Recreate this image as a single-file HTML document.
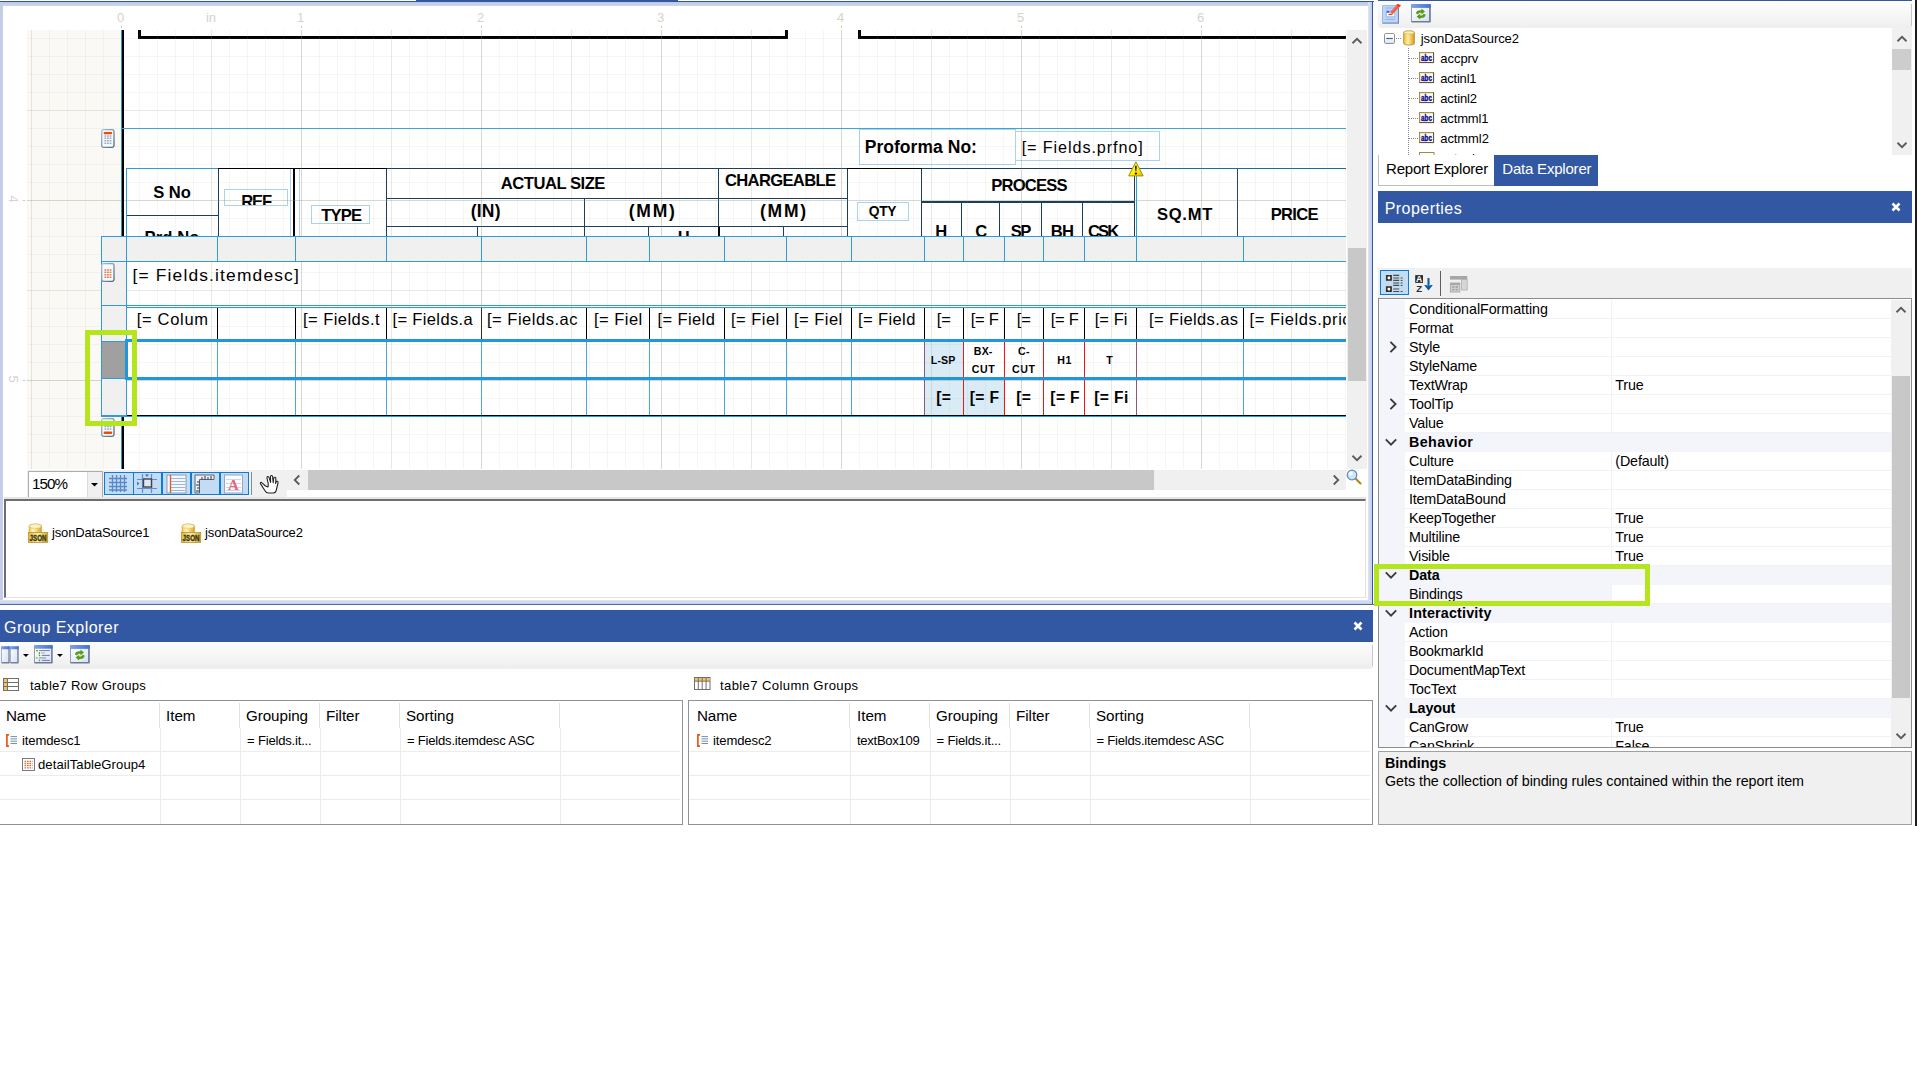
<!DOCTYPE html>
<html lang="en"><head><meta charset="utf-8"><title>Report Designer</title>
<style>
html,body{margin:0;padding:0;background:#fff;}
body{width:1924px;height:1084px;position:relative;overflow:hidden;font-family:"Liberation Sans",sans-serif;}
div{position:absolute;box-sizing:border-box;}
.t{white-space:nowrap;}
svg{position:absolute;overflow:visible;}

.ln{background:#3d9bd6;}

</style></head><body>
<div style="left:0px;top:1px;width:1374px;height:1px;background:#3358a3;"></div>
<div style="left:416px;top:0px;width:262px;height:2px;background:#3358a3;"></div>
<div style="left:0px;top:2px;width:1372px;height:4px;background:linear-gradient(#b9c5e3,#c4cee8 40%,#cfd7ec);"></div>
<div style="left:0px;top:2px;width:3px;height:603px;background:#c4cee8;"></div>
<div style="left:1368px;top:2px;width:4px;height:603px;background:linear-gradient(90deg,#dfe4f3,#c4cee8);"></div>
<div style="left:1372px;top:1px;width:1.4px;height:604px;background:#3358a3;"></div>
<div style="left:0px;top:600px;width:1372px;height:4px;background:linear-gradient(#dfe4f3,#c4cee8);"></div>
<div style="left:0px;top:604px;width:1374px;height:1px;background:#4a68b0;"></div>
<div class="t" style="left:116.88px;top:9.00px;font-size:13px;line-height:17px;color:#d9d2c6;">0</div>
<div style="left:121.0px;top:26px;width:1px;height:2px;background:#c9c4ba;"></div>
<div class="t" style="left:296.88px;top:9.00px;font-size:13px;line-height:17px;color:#d9d2c6;">1</div>
<div style="left:301.0px;top:26px;width:1px;height:2px;background:#c9c4ba;"></div>
<div class="t" style="left:476.88px;top:9.00px;font-size:13px;line-height:17px;color:#d9d2c6;">2</div>
<div style="left:481.0px;top:26px;width:1px;height:2px;background:#c9c4ba;"></div>
<div class="t" style="left:656.88px;top:9.00px;font-size:13px;line-height:17px;color:#d9d2c6;">3</div>
<div style="left:661.0px;top:26px;width:1px;height:2px;background:#c9c4ba;"></div>
<div class="t" style="left:836.88px;top:9.00px;font-size:13px;line-height:17px;color:#d9d2c6;">4</div>
<div style="left:841.0px;top:26px;width:1px;height:2px;background:#c9c4ba;"></div>
<div class="t" style="left:1016.88px;top:9.00px;font-size:13px;line-height:17px;color:#d9d2c6;">5</div>
<div style="left:1021.0px;top:26px;width:1px;height:2px;background:#c9c4ba;"></div>
<div class="t" style="left:1196.88px;top:9.00px;font-size:13px;line-height:17px;color:#d9d2c6;">6</div>
<div style="left:1201.0px;top:26px;width:1px;height:2px;background:#c9c4ba;"></div>
<div class="t" style="left:205.94px;top:9.00px;font-size:13px;line-height:17px;color:#d9d2c6;">in</div>
<div class="t" style="left:4.4px;top:190.4px;width:18px;height:18px;line-height:18px;font-size:13px;color:#d9d2c6;text-align:center;transform:rotate(90deg);">4</div>
<div style="left:23px;top:200px;width:2px;height:1px;background:#c9c4ba;"></div>
<div class="t" style="left:4.4px;top:370.4px;width:18px;height:18px;line-height:18px;font-size:13px;color:#d9d2c6;text-align:center;transform:rotate(90deg);">5</div>
<div style="left:23px;top:380px;width:2px;height:1px;background:#c9c4ba;"></div>
<div style="left:27px;top:30px;width:1319px;height:439px;overflow:hidden;background:#fff;">
<div style="left:-27px;top:-30px;width:1924px;height:1084px;">
<div style="left:27px;top:30px;width:94.5px;height:439px;background:#faf9f5;"></div>
<div style="left:138px;top:36px;width:650px;height:3px;background:#000;"></div>
<div style="left:138px;top:30px;width:3px;height:9px;background:#000;"></div>
<div style="left:785px;top:30px;width:3px;height:9px;background:#000;"></div>
<div style="left:858px;top:36px;width:500px;height:3px;background:#000;"></div>
<div style="left:858px;top:30px;width:3px;height:9px;background:#000;"></div>
<div style="left:858.6px;top:128.6px;width:157.6px;height:36.6px;border:1.2px solid #a9d3ee;"></div>
<div style="left:1015.4px;top:130.8px;width:144.8px;height:30.2px;border:1.2px solid #a9d3ee;"></div>
<div class="t" style="left:864.70px;top:136.34px;font-size:17.5px;line-height:23px;color:#000;font-weight:bold;letter-spacing:0.041px;">Proforma No:</div>
<div class="t" style="left:1021.70px;top:136.69px;font-size:16.2px;line-height:21px;color:#000;letter-spacing:0.900px;">[= Fields.prfno]</div>
<div style="left:0;top:160px;width:1924px;height:76.5px;overflow:hidden;">
<div style="left:0;top:-160px;width:1924px;height:400px;">
<div style="left:126px;top:168.1px;width:92px;height:1.2px;background:#2f9cd8;"></div>
<div style="left:218px;top:168.0px;width:169px;height:1.4px;background:#000;"></div>
<div style="left:387px;top:168.0px;width:461px;height:1.4px;background:#1b3f58;"></div>
<div style="left:847px;top:168.0px;width:75px;height:1.4px;background:#000;"></div>
<div style="left:922px;top:168.0px;width:213px;height:1.4px;background:#1b3f58;"></div>
<div style="left:1135px;top:168.0px;width:225px;height:1.4px;background:#1f6a9c;"></div>
<div style="left:125.9px;top:168.7px;width:1.2px;height:71.3px;background:#2f9cd8;"></div>
<div style="left:126.5px;top:214.7px;width:91.8px;height:1.4px;background:#1b3f58;"></div>
<div style="left:217.6px;top:168.7px;width:1.4px;height:71.3px;background:#1b3f58;"></div>
<div style="left:290.2px;top:168.7px;width:1.2px;height:71.3px;background:#a9d3ee;"></div>
<div style="left:293.25px;top:168.7px;width:2.1px;height:71.3px;background:#000;"></div>
<div style="left:299.0px;top:168.7px;width:1.2px;height:71.3px;background:#a9d3ee;"></div>
<div style="left:224px;top:188.9px;width:64.4px;height:17.2px;border:1.2px solid #a9d3ee;"></div>
<div style="left:310.8px;top:205.1px;width:59px;height:19px;border:1.2px solid #a9d3ee;"></div>
<div style="left:385.9px;top:168.7px;width:1.4px;height:71.3px;background:#1b3f58;"></div>
<div style="left:386.6px;top:197.95px;width:460.9px;height:1.3px;background:#1b3f58;"></div>
<div style="left:386.6px;top:225.95px;width:460.9px;height:1.3px;background:#1b3f58;"></div>
<div style="left:584.0px;top:199px;width:1.4px;height:41px;background:#1b3f58;"></div>
<div style="left:718.0px;top:168.7px;width:1.4px;height:71.3px;background:#1b3f58;"></div>
<div style="left:846.7px;top:168.7px;width:1.4px;height:71.3px;background:#1b3f58;"></div>
<div style="left:476.7px;top:227px;width:1.4px;height:13px;background:#1b3f58;"></div>
<div style="left:648.1px;top:227px;width:1.4px;height:13px;background:#1b3f58;"></div>
<div style="left:782.8px;top:227px;width:1.4px;height:13px;background:#1b3f58;"></div>
<div style="left:718.1px;top:227px;width:2.2px;height:13px;background:#000;"></div>
<div style="left:920.9px;top:168.7px;width:1.4px;height:71.3px;background:#1b3f58;"></div>
<div style="left:856.5px;top:201.9px;width:52.8px;height:19.4px;border:1.2px solid #a9d3ee;"></div>
<div style="left:921.6px;top:201.45px;width:213.4px;height:1.3px;background:#1b3f58;"></div>
<div style="left:960.7px;top:202px;width:1.4px;height:38px;background:#1b3f58;"></div>
<div style="left:998.6px;top:202px;width:1.4px;height:38px;background:#1b3f58;"></div>
<div style="left:1040.5px;top:202px;width:1.4px;height:38px;background:#1b3f58;"></div>
<div style="left:1081.6px;top:202px;width:1.4px;height:38px;background:#1b3f58;"></div>
<div style="left:1133.6px;top:168.7px;width:1.4px;height:71.3px;background:#1b3f58;"></div>
<div style="left:1135.8px;top:168.7px;width:1.2px;height:71.3px;background:#2f9cd8;"></div>
<div style="left:1236.8px;top:168.7px;width:1.4px;height:71.3px;background:#1b3f58;"></div>
<div class="t" style="left:153.25px;top:181.55px;font-size:16.6px;line-height:22px;color:#000;font-weight:bold;letter-spacing:-0.078px;">S No</div>
<div class="t" style="left:144.50px;top:227.25px;font-size:16.6px;line-height:22px;color:#000;font-weight:bold;letter-spacing:0.098px;">Prd No</div>
<div style="left:225px;top:190px;width:62.5px;height:15.2px;overflow:hidden;">
<div class="t" style="left:16.20px;top:1.05px;font-size:16.6px;line-height:22px;color:#000;font-weight:bold;letter-spacing:-1.067px;">REF</div>
</div>
<div class="t" style="left:321.20px;top:204.55px;font-size:16.6px;line-height:22px;color:#000;font-weight:bold;letter-spacing:-0.840px;">TYPE</div>
<div class="t" style="left:500.80px;top:173.25px;font-size:16.6px;line-height:22px;color:#000;font-weight:bold;letter-spacing:-0.477px;">ACTUAL SIZE</div>
<div class="t" style="left:470.70px;top:200.44px;font-size:17.5px;line-height:23px;color:#000;font-weight:bold;letter-spacing:0.211px;">(IN)</div>
<div class="t" style="left:628.70px;top:200.44px;font-size:17.5px;line-height:23px;color:#000;font-weight:bold;letter-spacing:1.797px;">(MM)</div>
<div class="t" style="left:724.95px;top:170.25px;font-size:16.6px;line-height:22px;color:#000;font-weight:bold;letter-spacing:-0.663px;">CHARGEABLE</div>
<div class="t" style="left:760.00px;top:200.44px;font-size:17.5px;line-height:23px;color:#000;font-weight:bold;letter-spacing:1.797px;">(MM)</div>
<div class="t" style="left:677.81px;top:227.25px;font-size:16.6px;line-height:22px;color:#000;font-weight:bold;">H</div>
<div class="t" style="left:868.70px;top:202.92px;font-size:13.8px;line-height:18px;color:#000;font-weight:bold;letter-spacing:-0.256px;">QTY</div>
<div class="t" style="left:991.30px;top:174.95px;font-size:16.6px;line-height:22px;color:#000;font-weight:bold;letter-spacing:-0.826px;">PROCESS</div>
<div class="t" style="left:935.21px;top:220.85px;font-size:16.6px;line-height:22px;color:#000;font-weight:bold;">H</div>
<div class="t" style="left:975.21px;top:220.85px;font-size:16.6px;line-height:22px;color:#000;font-weight:bold;">C</div>
<div class="t" style="left:1010.75px;top:220.85px;font-size:16.6px;line-height:22px;color:#000;font-weight:bold;letter-spacing:-1.623px;">SP</div>
<div class="t" style="left:1050.80px;top:220.85px;font-size:16.6px;line-height:22px;color:#000;font-weight:bold;letter-spacing:-0.888px;">BH</div>
<div class="t" style="left:1087.95px;top:220.85px;font-size:16.6px;line-height:22px;color:#000;font-weight:bold;letter-spacing:-1.850px;">CSK</div>
<div class="t" style="left:1157.00px;top:203.75px;font-size:16.6px;line-height:22px;color:#000;font-weight:bold;letter-spacing:0.687px;">SQ.MT</div>
<div class="t" style="left:1270.80px;top:203.75px;font-size:16.6px;line-height:22px;color:#000;font-weight:bold;letter-spacing:-0.747px;">PRICE</div>
</div></div>
<div style="left:924.7px;top:342px;width:39px;height:74px;background:#d9ebf4;"></div>
<div style="left:963.7px;top:380px;width:41.1px;height:36px;background:#d9ebf4;"></div>
<div class="t" style="left:132.50px;top:263.77px;font-size:17.4px;line-height:23px;color:#000;letter-spacing:1.156px;">[= Fields.itemdesc]</div>
<div class="t" style="left:136.70px;top:308.58px;font-size:16.5px;line-height:21px;color:#000;letter-spacing:0.689px;">[= Colum</div>
<div class="t" style="left:303.00px;top:308.58px;font-size:16.5px;line-height:21px;color:#000;letter-spacing:0.456px;">[= Fields.t</div>
<div class="t" style="left:392.50px;top:308.58px;font-size:16.5px;line-height:21px;color:#000;letter-spacing:0.356px;">[= Fields.a</div>
<div class="t" style="left:487.00px;top:308.58px;font-size:16.5px;line-height:21px;color:#000;letter-spacing:0.514px;">[= Fields.ac</div>
<div class="t" style="left:594.00px;top:308.58px;font-size:16.5px;line-height:21px;color:#000;letter-spacing:0.473px;">[= Fiel</div>
<div class="t" style="left:657.50px;top:308.58px;font-size:16.5px;line-height:21px;color:#000;letter-spacing:0.391px;">[= Field</div>
<div class="t" style="left:731.00px;top:308.58px;font-size:16.5px;line-height:21px;color:#000;letter-spacing:0.473px;">[= Fiel</div>
<div class="t" style="left:794.00px;top:308.58px;font-size:16.5px;line-height:21px;color:#000;letter-spacing:0.473px;">[= Fiel</div>
<div class="t" style="left:858.00px;top:308.58px;font-size:16.5px;line-height:21px;color:#000;letter-spacing:0.391px;">[= Field</div>
<div class="t" style="left:936.70px;top:308.58px;font-size:16.5px;line-height:21px;color:#000;letter-spacing:0.040px;">[=</div>
<div class="t" style="left:970.80px;top:308.58px;font-size:16.5px;line-height:21px;color:#000;letter-spacing:-0.321px;">[= F</div>
<div class="t" style="left:1016.70px;top:308.58px;font-size:16.5px;line-height:21px;color:#000;letter-spacing:0.040px;">[=</div>
<div class="t" style="left:1050.80px;top:308.58px;font-size:16.5px;line-height:21px;color:#000;letter-spacing:-0.321px;">[= F</div>
<div class="t" style="left:1094.70px;top:308.58px;font-size:16.5px;line-height:21px;color:#000;letter-spacing:0.050px;">[= Fi</div>
<div class="t" style="left:1149.00px;top:308.58px;font-size:16.5px;line-height:21px;color:#000;letter-spacing:0.373px;">[= Fields.as</div>
<div class="t" style="left:1249.50px;top:308.58px;font-size:16.5px;line-height:21px;color:#000;letter-spacing:0.547px;">[= Fields.price]</div>
<div style="left:217.1px;top:308px;width:1.2px;height:31.3px;background:#000;"></div>
<div style="left:295.1px;top:308px;width:1.2px;height:31.3px;background:#000;"></div>
<div style="left:386.1px;top:308px;width:1.2px;height:31.3px;background:#000;"></div>
<div style="left:481.1px;top:308px;width:1.2px;height:31.3px;background:#000;"></div>
<div style="left:586.1px;top:308px;width:1.2px;height:31.3px;background:#000;"></div>
<div style="left:648.7px;top:308px;width:1.2px;height:31.3px;background:#000;"></div>
<div style="left:723.7px;top:308px;width:1.2px;height:31.3px;background:#000;"></div>
<div style="left:785.9px;top:308px;width:1.2px;height:31.3px;background:#000;"></div>
<div style="left:850.9px;top:308px;width:1.2px;height:31.3px;background:#000;"></div>
<div style="left:924.0px;top:308px;width:1.2px;height:31.3px;background:#000;"></div>
<div style="left:963.0px;top:308px;width:1.2px;height:31.3px;background:#000;"></div>
<div style="left:1004.1px;top:308px;width:1.2px;height:31.3px;background:#000;"></div>
<div style="left:1043.0px;top:308px;width:1.2px;height:31.3px;background:#000;"></div>
<div style="left:1084.1px;top:308px;width:1.2px;height:31.3px;background:#000;"></div>
<div style="left:1136.1px;top:308px;width:1.2px;height:31.3px;background:#000;"></div>
<div style="left:1243.1px;top:308px;width:1.2px;height:31.3px;background:#000;"></div>
<div class="t" style="left:930.85px;top:353.03px;font-size:10.6px;line-height:14px;color:#000;font-weight:bold;letter-spacing:0.088px;">L-SP</div>
<div class="t" style="left:973.85px;top:344.03px;font-size:10.6px;line-height:14px;color:#000;font-weight:bold;letter-spacing:0.148px;">BX-</div>
<div class="t" style="left:971.70px;top:361.83px;font-size:10.6px;line-height:14px;color:#000;font-weight:bold;letter-spacing:0.605px;">CUT</div>
<div class="t" style="left:1018.05px;top:344.03px;font-size:10.6px;line-height:14px;color:#000;font-weight:bold;letter-spacing:0.257px;">C-</div>
<div class="t" style="left:1011.90px;top:361.83px;font-size:10.6px;line-height:14px;color:#000;font-weight:bold;letter-spacing:0.605px;">CUT</div>
<div class="t" style="left:1057.25px;top:353.03px;font-size:10.6px;line-height:14px;color:#000;font-weight:bold;letter-spacing:0.475px;">H1</div>
<div class="t" style="left:1106.16px;top:353.03px;font-size:10.6px;line-height:14px;color:#000;font-weight:bold;">T</div>
<div class="t" style="left:936.35px;top:387.89px;font-size:15.6px;line-height:20px;color:#000;font-weight:bold;letter-spacing:0.097px;">[=</div>
<div class="t" style="left:969.75px;top:387.89px;font-size:15.6px;line-height:20px;color:#000;font-weight:bold;letter-spacing:0.333px;">[= F</div>
<div class="t" style="left:1016.30px;top:387.89px;font-size:15.6px;line-height:20px;color:#000;font-weight:bold;letter-spacing:0.347px;">[=</div>
<div class="t" style="left:1050.35px;top:387.89px;font-size:15.6px;line-height:20px;color:#000;font-weight:bold;letter-spacing:0.383px;">[= F</div>
<div class="t" style="left:1094.25px;top:387.89px;font-size:15.6px;line-height:20px;color:#000;font-weight:bold;letter-spacing:0.399px;">[= Fi</div>
<div style="left:126.4px;top:414.75px;width:1233.6px;height:1.5px;background:#000;"></div>
<div style="left:27px;top:30px;width:1319px;height:439px;background-image:linear-gradient(90deg,rgba(140,130,110,.17) 1px,transparent 1px),linear-gradient(rgba(140,130,110,.17) 1px,transparent 1px),linear-gradient(90deg,rgba(150,140,120,.13) 1px,transparent 1px),linear-gradient(rgba(150,140,120,.13) 1px,transparent 1px),linear-gradient(90deg,rgba(160,150,130,.085) 1px,transparent 1px),linear-gradient(rgba(160,150,130,.085) 1px,transparent 1px);background-size:180px 180px,180px 180px,90px 90px,90px 90px,18px 18px,18px 18px;background-position:94px 0,0 170px,4px 0,0 80px,4px 0,0 8px;"></div>
<div style="left:121px;top:30px;width:1.2px;height:439px;background:#3d8fc6;"></div>
<div style="left:122px;top:30px;width:2.2px;height:439px;background:#000;"></div>
<div style="left:122px;top:128.15px;width:1238px;height:1.1px;background:#3fa3dc;"></div>
<div style="left:101.2px;top:236px;width:1300px;height:26.1px;background:#f0f0f0;border:1.2px solid #2f9cd8;"></div>
<div style="left:125.75px;top:236px;width:1.3px;height:26px;background:#2f9cd8;"></div>
<div style="left:217.05px;top:236px;width:1.3px;height:26px;background:#2f9cd8;"></div>
<div style="left:295.05px;top:236px;width:1.3px;height:26px;background:#2f9cd8;"></div>
<div style="left:386.05px;top:236px;width:1.3px;height:26px;background:#2f9cd8;"></div>
<div style="left:481.05px;top:236px;width:1.3px;height:26px;background:#2f9cd8;"></div>
<div style="left:586.05px;top:236px;width:1.3px;height:26px;background:#2f9cd8;"></div>
<div style="left:648.65px;top:236px;width:1.3px;height:26px;background:#2f9cd8;"></div>
<div style="left:723.65px;top:236px;width:1.3px;height:26px;background:#2f9cd8;"></div>
<div style="left:785.85px;top:236px;width:1.3px;height:26px;background:#2f9cd8;"></div>
<div style="left:850.85px;top:236px;width:1.3px;height:26px;background:#2f9cd8;"></div>
<div style="left:923.95px;top:236px;width:1.3px;height:26px;background:#2f9cd8;"></div>
<div style="left:962.95px;top:236px;width:1.3px;height:26px;background:#2f9cd8;"></div>
<div style="left:1004.05px;top:236px;width:1.3px;height:26px;background:#2f9cd8;"></div>
<div style="left:1042.95px;top:236px;width:1.3px;height:26px;background:#2f9cd8;"></div>
<div style="left:1084.05px;top:236px;width:1.3px;height:26px;background:#2f9cd8;"></div>
<div style="left:1136.05px;top:236px;width:1.3px;height:26px;background:#2f9cd8;"></div>
<div style="left:1243.05px;top:236px;width:1.3px;height:26px;background:#2f9cd8;"></div>
<div style="left:101.2px;top:261px;width:25.8px;height:155.3px;background:#f0f0f0;border:1.2px solid #2f9cd8;"></div>
<div style="left:101.2px;top:304.8px;width:1258.8px;height:1.2px;background:#2f9cd8;"></div>
<div style="left:126.4px;top:307.0px;width:1233.6px;height:1.2px;background:#2f9cd8;"></div>
<div style="left:217.15px;top:342px;width:1.1px;height:73.2px;background:#4aa6de;"></div>
<div style="left:295.15px;top:342px;width:1.1px;height:73.2px;background:#4aa6de;"></div>
<div style="left:386.15px;top:342px;width:1.1px;height:73.2px;background:#4aa6de;"></div>
<div style="left:481.15px;top:342px;width:1.1px;height:73.2px;background:#4aa6de;"></div>
<div style="left:586.15px;top:342px;width:1.1px;height:73.2px;background:#4aa6de;"></div>
<div style="left:648.75px;top:342px;width:1.1px;height:73.2px;background:#4aa6de;"></div>
<div style="left:723.75px;top:342px;width:1.1px;height:73.2px;background:#4aa6de;"></div>
<div style="left:785.95px;top:342px;width:1.1px;height:73.2px;background:#4aa6de;"></div>
<div style="left:850.95px;top:342px;width:1.1px;height:73.2px;background:#4aa6de;"></div>
<div style="left:924.05px;top:342px;width:1.1px;height:73.2px;background:#8d5877;"></div>
<div style="left:963.05px;top:342px;width:1.1px;height:73.2px;background:#f21616;"></div>
<div style="left:1004.15px;top:342px;width:1.1px;height:73.2px;background:#f21616;"></div>
<div style="left:1043.05px;top:342px;width:1.1px;height:73.2px;background:#f21616;"></div>
<div style="left:1084.15px;top:342px;width:1.1px;height:73.2px;background:#f21616;"></div>
<div style="left:1136.15px;top:342px;width:1.1px;height:73.2px;background:#8d5877;"></div>
<div style="left:1243.15px;top:342px;width:1.1px;height:73.2px;background:#4aa6de;"></div>
<div style="left:101.2px;top:415.5px;width:1258.8px;height:1px;background:#2f9cd8;"></div>
<div style="left:102px;top:342px;width:24px;height:36px;background:#a0a0a0;"></div>
<div style="left:126px;top:339.05px;width:1234px;height:3.1px;background:#2196d8;"></div>
<div style="left:126px;top:377.35px;width:1234px;height:2.9px;background:#2196d8;"></div>
<div style="left:125.4px;top:339.1px;width:3px;height:41.1px;background:#2196d8;"></div>
<div style="left:101.2px;top:340.8px;width:25.8px;height:1.2px;background:#2f9cd8;"></div>
<div style="left:101.2px;top:377.8px;width:25.8px;height:1.2px;background:#2f9cd8;"></div>
<svg style="left:100.6px;top:129.2px" width="14" height="19" viewBox="0 0 14 19"><defs><linearGradient id="sgtop" x1="0" y1="0" x2="1" y2="1"><stop offset="0" stop-color="#a9c3d8"/><stop offset="1" stop-color="#4f6578"/></linearGradient></defs><rect x=".7" y=".7" width="12.3" height="17.6" rx="1.8" fill="#f4f9fd" stroke="url(#sgtop)" stroke-width="1.3"/><rect x="2.6" y="2.9" width="8.6" height="2.4" rx="1" fill="#ee4a06"/><rect x="3.3499999999999996" y="6.15" width="1.9" height="1.5" rx=".5" fill="#8fa5b8" opacity=".9"/><rect x="5.95" y="6.15" width="1.9" height="1.5" rx=".5" fill="#8fa5b8" opacity=".9"/><rect x="8.55" y="6.15" width="1.9" height="1.5" rx=".5" fill="#8fa5b8" opacity=".9"/><rect x="3.3499999999999996" y="8.55" width="1.9" height="1.5" rx=".5" fill="#8fa5b8" opacity=".9"/><rect x="5.95" y="8.55" width="1.9" height="1.5" rx=".5" fill="#8fa5b8" opacity=".9"/><rect x="8.55" y="8.55" width="1.9" height="1.5" rx=".5" fill="#8fa5b8" opacity=".9"/><rect x="3.3499999999999996" y="11.05" width="1.9" height="1.5" rx=".5" fill="#8fa5b8" opacity=".9"/><rect x="5.95" y="11.05" width="1.9" height="1.5" rx=".5" fill="#8fa5b8" opacity=".9"/><rect x="8.55" y="11.05" width="1.9" height="1.5" rx=".5" fill="#8fa5b8" opacity=".9"/><rect x="3.3499999999999996" y="13.55" width="1.9" height="1.5" rx=".5" fill="#8fa5b8" opacity=".9"/><rect x="5.95" y="13.55" width="1.9" height="1.5" rx=".5" fill="#8fa5b8" opacity=".9"/><rect x="8.55" y="13.55" width="1.9" height="1.5" rx=".5" fill="#8fa5b8" opacity=".9"/></svg>
<svg style="left:100.6px;top:262.5px" width="14" height="19" viewBox="0 0 14 19"><defs><linearGradient id="sgdetail" x1="0" y1="0" x2="1" y2="1"><stop offset="0" stop-color="#a9c3d8"/><stop offset="1" stop-color="#4f6578"/></linearGradient></defs><rect x=".7" y=".7" width="12.3" height="17.6" rx="1.8" fill="#f4f9fd" stroke="url(#sgdetail)" stroke-width="1.3"/><rect x="3.3499999999999996" y="6.15" width="1.9" height="1.5" rx=".5" fill="#ea6a2a" opacity=".9"/><rect x="5.95" y="6.15" width="1.9" height="1.5" rx=".5" fill="#ea6a2a" opacity=".9"/><rect x="8.55" y="6.15" width="1.9" height="1.5" rx=".5" fill="#ea6a2a" opacity=".9"/><rect x="3.3499999999999996" y="8.55" width="1.9" height="1.5" rx=".5" fill="#ea6a2a" opacity=".9"/><rect x="5.95" y="8.55" width="1.9" height="1.5" rx=".5" fill="#ea6a2a" opacity=".9"/><rect x="8.55" y="8.55" width="1.9" height="1.5" rx=".5" fill="#ea6a2a" opacity=".9"/><rect x="3.3499999999999996" y="11.05" width="1.9" height="1.5" rx=".5" fill="#ea6a2a" opacity=".9"/><rect x="5.95" y="11.05" width="1.9" height="1.5" rx=".5" fill="#ea6a2a" opacity=".9"/><rect x="8.55" y="11.05" width="1.9" height="1.5" rx=".5" fill="#ea6a2a" opacity=".9"/><rect x="3.3499999999999996" y="13.55" width="1.9" height="1.5" rx=".5" fill="#ea6a2a" opacity=".9"/><rect x="5.95" y="13.55" width="1.9" height="1.5" rx=".5" fill="#ea6a2a" opacity=".9"/><rect x="8.55" y="13.55" width="1.9" height="1.5" rx=".5" fill="#ea6a2a" opacity=".9"/></svg>
<svg style="left:100.6px;top:418.2px" width="14" height="19" viewBox="0 0 14 19"><defs><linearGradient id="sgbottom" x1="0" y1="0" x2="1" y2="1"><stop offset="0" stop-color="#a9c3d8"/><stop offset="1" stop-color="#4f6578"/></linearGradient></defs><rect x=".7" y=".7" width="12.3" height="17.6" rx="1.8" fill="#f4f9fd" stroke="url(#sgbottom)" stroke-width="1.3"/><rect x="2.6" y="13.6" width="8.6" height="2.4" rx="1" fill="#ee4a06"/><rect x="3.3499999999999996" y="2.85" width="1.9" height="1.5" rx=".5" fill="#8fa5b8" opacity=".9"/><rect x="5.95" y="2.85" width="1.9" height="1.5" rx=".5" fill="#8fa5b8" opacity=".9"/><rect x="8.55" y="2.85" width="1.9" height="1.5" rx=".5" fill="#8fa5b8" opacity=".9"/><rect x="3.3499999999999996" y="5.35" width="1.9" height="1.5" rx=".5" fill="#8fa5b8" opacity=".9"/><rect x="5.95" y="5.35" width="1.9" height="1.5" rx=".5" fill="#8fa5b8" opacity=".9"/><rect x="8.55" y="5.35" width="1.9" height="1.5" rx=".5" fill="#8fa5b8" opacity=".9"/><rect x="3.3499999999999996" y="7.85" width="1.9" height="1.5" rx=".5" fill="#8fa5b8" opacity=".9"/><rect x="5.95" y="7.85" width="1.9" height="1.5" rx=".5" fill="#8fa5b8" opacity=".9"/><rect x="8.55" y="7.85" width="1.9" height="1.5" rx=".5" fill="#8fa5b8" opacity=".9"/><rect x="3.3499999999999996" y="10.35" width="1.9" height="1.5" rx=".5" fill="#8fa5b8" opacity=".9"/><rect x="5.95" y="10.35" width="1.9" height="1.5" rx=".5" fill="#8fa5b8" opacity=".9"/><rect x="8.55" y="10.35" width="1.9" height="1.5" rx=".5" fill="#8fa5b8" opacity=".9"/></svg>
<svg style="left:1127.5px;top:160.5px" width="16" height="16" viewBox="0 0 16 16"><defs><linearGradient id="wg" x1="0" y1="0" x2="1" y2="1"><stop offset="0" stop-color="#fffb5a"/><stop offset=".55" stop-color="#fff200"/><stop offset="1" stop-color="#e8b800"/></linearGradient></defs><path d="M7.9,0.8 L15.2,14.9 H0.7 Z" fill="url(#wg)" stroke="#a88a10" stroke-width="1" stroke-linejoin="round"/><path d="M7.9,4.4 C8.9,4.4 8.9,6 8.6,7.6 L8.2,10.4 H7.6 L7.2,7.6 C6.9,6 6.9,4.4 7.9,4.4 Z" fill="#1a1060"/><circle cx="7.9" cy="12.6" r="1.15" fill="#1a1060"/></svg>
<div style="left:85px;top:330.4px;width:52px;height:95.4px;border:5px solid #b5e61d;"></div>
</div></div>
<div style="left:1347px;top:30px;width:20px;height:439px;background:#f0f0f0;"></div>
<div style="left:1348px;top:247.5px;width:18px;height:133px;background:#c8c8c8;"></div>
<svg style="left:1356.5px;top:40.5px" width="1" height="1"><path d="M-4.5,2.25 L0,-2.25 L4.5,2.25" fill="none" stroke="#5a5a5a" stroke-width="1.8"/></svg>
<svg style="left:1356.5px;top:458px" width="1" height="1"><path d="M-4.5,-2.25 L0,2.25 L4.5,-2.25" fill="none" stroke="#5a5a5a" stroke-width="1.8"/></svg>
<div style="left:27px;top:470px;width:260px;height:27px;background:#f0f0f0;"></div>
<div style="left:287px;top:470px;width:1059px;height:20px;background:#f0f0f0;"></div>
<div style="left:308px;top:470px;width:846px;height:19.5px;background:#c8c8c8;"></div>
<svg style="left:296.5px;top:479.7px" width="1" height="1"><path d="M2.25,-4.5 L-2.25,0 L2.25,4.5" fill="none" stroke="#5a5a5a" stroke-width="1.8"/></svg>
<svg style="left:1335.5px;top:479.7px" width="1" height="1"><path d="M-2.25,-4.5 L2.25,0 L-2.25,4.5" fill="none" stroke="#5a5a5a" stroke-width="1.8"/></svg>
<div style="left:28px;top:470.6px;width:75px;height:26px;background:#fff;border:1px solid #adadad;border-bottom:none;"></div>
<div style="left:87px;top:471.6px;width:15px;height:25px;background:#f0f0f0;border-left:1px solid #dadada;"></div>
<div class="t" style="left:32.00px;top:473.73px;font-size:15.2px;line-height:20px;color:#000;letter-spacing:-0.969px;">150%</div>
<svg style="left:91px;top:483px" width="8" height="4"><path d="M0,0 L7,0 L3.5,3.5 Z" fill="#000"/></svg>
<div style="left:104px;top:472px;width:145px;height:22.6px;background:#0f7bd8;"></div>
<div style="left:105.0px;top:473px;width:27.5px;height:20.6px;background:#c2dcf3;"></div>
<div style="left:133.9px;top:473px;width:27.5px;height:20.6px;background:#c2dcf3;"></div>
<div style="left:162.8px;top:473px;width:27.5px;height:20.6px;background:#c2dcf3;"></div>
<div style="left:191.7px;top:473px;width:27.5px;height:20.6px;background:#c2dcf3;"></div>
<div style="left:220.6px;top:473px;width:27.9px;height:20.6px;background:#c2dcf3;"></div>
<div style="left:251px;top:472px;width:1px;height:23px;background:#8c8c8c;"></div>
<svg style="left:108px;top:474px" width="22" height="19" viewBox="0 0 22 19"><g stroke="#4f7fc5" stroke-width="1.3" opacity=".9"><path d="M4.5,1v17M8.5,1v17M12.5,1v17M16.5,1v17M1,4.5h18M1,8.5h18M1,12.5h18M1,16h18"/></g></svg>
<svg style="left:136px;top:473px" width="24" height="21" viewBox="0 0 24 21"><g stroke="#5f8fd0" stroke-width="1.2"><path d="M6.5,1v19M15.5,1v19M1,6.5h20M1,15.5h20"/></g><rect x="7.5" y="6" width="8" height="8" fill="#dfe7f5" stroke="#444" stroke-width="1.4"/><path d="M9,1.5h4l-2,2.2z M1.2,8.5v4l2,-2z" fill="#3a62b0"/></svg>
<svg style="left:166px;top:474px" width="21" height="20" viewBox="0 0 21 20"><rect x="1" y="1" width="19" height="18" fill="#f4f8fd" stroke="#8c9bb3" stroke-width="1"/><path d="M5,4.5h14M5,7.5h14M5,10.5h14M5,13.5h14M5,16.5h14" stroke="#9bb7e0" stroke-width="1.2"/><path d="M4.5,1v18" stroke="#e0602a" stroke-width="1.4"/></svg>
<svg style="left:194px;top:474px" width="22" height="20" viewBox="0 0 22 20"><path d="M1,1h19v4.5H5.5V19H1z" fill="#eef2f8" stroke="#5a6478" stroke-width="1"/><path d="M8,3v2.5M11,2v3.5M14,3v2.5M17,2v3.5M3,8h2.5M2,11h3.5M3,14h2.5M2,17h3.5" stroke="#333" stroke-width="1"/></svg>
<svg style="left:223px;top:474px" width="22" height="20" viewBox="0 0 22 20"><rect x="1.5" y="1" width="18" height="18" fill="#fbfcfe" stroke="#9aa6ba" stroke-width="1"/><path d="M3,5.5h15M3,9.5h15M3,13.5h15M3,16.5h15" stroke="#c9d8ee" stroke-width="1"/><text x="10.5" y="16" font-family="Liberation Serif,serif" font-weight="bold" font-size="15" fill="#e9677a" text-anchor="middle">A</text></svg>
<svg style="left:259px;top:474px" width="21" height="20" viewBox="0 0 21 20"><path d="M6.5,12 L3,8.8 C2,7.6 0.8,8.6 1.6,9.9 L6.2,17 C7,18.4 8,19 9.5,19 L14.5,19 C16,19 16.8,18 17.2,16.5 L19,9 C19.4,7.2 17.6,6.6 17,8.2 L16.6,9.5 L16.9,4.6 C17,3 15,2.8 14.7,4.4 L14.2,8.6 L13.6,2.6 C13.4,1 11.4,1.2 11.5,2.8 L11.6,8.4 L10,3.4 C9.5,1.9 7.6,2.5 8,4.1 L9.3,10 L9,13 Z" fill="#fff" stroke="#222" stroke-width="1.1" stroke-linejoin="round"/></svg>
<svg style="left:1346px;top:469px" width="17" height="17" viewBox="0 0 17 17"><path d="M9,9 L14.5,14.5" stroke="#c89a2c" stroke-width="2.4" stroke-linecap="round"/><path d="M9,9 L14.5,14.5" stroke="#6b5a2a" stroke-width=".6"/><circle cx="6" cy="6" r="4.8" fill="#cfe6f8" stroke="#5b88b8" stroke-width="1.2"/><circle cx="4.8" cy="4.6" r="2" fill="#fff" opacity=".8"/></svg>
<div style="left:4px;top:497px;width:1362px;height:1.5px;background:#e6e6e6;"></div>
<div style="left:4px;top:499px;width:1362px;height:99px;background:#fff;border-top:2px solid #6e6e6e;border-left:2px solid #6e6e6e;border-bottom:1px solid #e3e3e3;border-right:1px solid #e3e3e3;"></div>
<svg style="left:28px;top:523px" width="21" height="21" viewBox="0 0 21 21"><defs><linearGradient id="cyg" x1="0" x2="1"><stop offset="0" stop-color="#f3c545"/><stop offset=".35" stop-color="#fff6c0"/><stop offset="1" stop-color="#dca21c"/></linearGradient><linearGradient id="jlb" x1="0" x2="1"><stop offset="0" stop-color="#d9b84a"/><stop offset=".5" stop-color="#f6eaa6"/><stop offset="1" stop-color="#cda93a"/></linearGradient></defs><path d="M1,3.2 C1,0.3 13.6,0.3 13.6,3.2 V11 H1 Z" fill="url(#cyg)" stroke="#c8a24a" stroke-width=".6"/><ellipse cx="7.3" cy="3.2" rx="6" ry="2.2" fill="#fdf3c0" stroke="#d8b55a" stroke-width=".5"/><rect x="0.5" y="9.4" width="19.2" height="10" fill="url(#jlb)" stroke="#b8942c" stroke-width=".8"/><text x="10.1" y="17.6" font-size="8.4" font-weight="bold" font-family="Liberation Sans,sans-serif" fill="#3e3004" stroke="#3e3004" stroke-width=".3" text-anchor="middle" textLength="17" lengthAdjust="spacingAndGlyphs">JSON</text></svg>
<svg style="left:181px;top:523px" width="21" height="21" viewBox="0 0 21 21"><defs><linearGradient id="cyg" x1="0" x2="1"><stop offset="0" stop-color="#f3c545"/><stop offset=".35" stop-color="#fff6c0"/><stop offset="1" stop-color="#dca21c"/></linearGradient><linearGradient id="jlb" x1="0" x2="1"><stop offset="0" stop-color="#d9b84a"/><stop offset=".5" stop-color="#f6eaa6"/><stop offset="1" stop-color="#cda93a"/></linearGradient></defs><path d="M1,3.2 C1,0.3 13.6,0.3 13.6,3.2 V11 H1 Z" fill="url(#cyg)" stroke="#c8a24a" stroke-width=".6"/><ellipse cx="7.3" cy="3.2" rx="6" ry="2.2" fill="#fdf3c0" stroke="#d8b55a" stroke-width=".5"/><rect x="0.5" y="9.4" width="19.2" height="10" fill="url(#jlb)" stroke="#b8942c" stroke-width=".8"/><text x="10.1" y="17.6" font-size="8.4" font-weight="bold" font-family="Liberation Sans,sans-serif" fill="#3e3004" stroke="#3e3004" stroke-width=".3" text-anchor="middle" textLength="17" lengthAdjust="spacingAndGlyphs">JSON</text></svg>
<div class="t" style="left:52.00px;top:523.60px;font-size:13px;line-height:17px;color:#000;letter-spacing:-0.155px;">jsonDataSource1</div>
<div class="t" style="left:205.00px;top:523.60px;font-size:13px;line-height:17px;color:#000;letter-spacing:-0.129px;">jsonDataSource2</div>
<div style="left:0px;top:610px;width:1373px;height:32px;background:#3358a3;"></div>
<div class="t" style="left:4.00px;top:616.96px;font-size:16px;line-height:21px;color:#fff;letter-spacing:0.465px;">Group Explorer</div>
<svg style="left:1353px;top:621px" width="10" height="10" viewBox="0 0 10 10"><path d="M1.5,1.5 L8.5,8.5 M8.5,1.5 L1.5,8.5" stroke="#fff" stroke-width="2.6"/></svg>
<div style="left:0px;top:642px;width:1373px;height:27px;background:linear-gradient(#fdfdfd,#f7f7f7 45%,#ededed);border-radius:0 0 3px 0;"></div>
<div style="left:1371.6px;top:645px;width:1px;height:21px;background:#c9c9c9;"></div>
<svg style="left:1px;top:646px" width="18" height="18" viewBox="0 0 18 18"><defs><linearGradient id="wtb" x1="0" x2="1"><stop offset="0" stop-color="#7ea2ec"/><stop offset="1" stop-color="#3f6fdc"/></linearGradient><linearGradient id="wbd" x1="0" y1="0" x2="1" y2="1"><stop offset="0" stop-color="#ffffff"/><stop offset="1" stop-color="#d6e0f6"/></linearGradient></defs><rect x=".3" y=".3" width="8.4" height="17.2" rx=".8" fill="#6c7c96"/><rect x="9.2" y=".3" width="8.5" height="17.2" rx=".8" fill="#6c7c96"/><rect x=".8" y=".3" width="6.6" height="15.8" fill="url(#wbd)"/><rect x="9.7" y=".3" width="6.6" height="15.8" fill="url(#wbd)"/><rect x=".3" y=".3" width="8.4" height="3" fill="url(#wtb)"/><rect x="9.2" y=".3" width="8.5" height="3" fill="url(#wtb)"/></svg>
<svg style="left:22.6px;top:654px" width="6" height="4"><path d="M0,0h5.8l-2.9,3.1z" fill="#000"/></svg>
<svg style="left:34px;top:645px" width="19" height="19" viewBox="0 0 19 19"><defs><linearGradient id="wtb" x1="0" x2="1"><stop offset="0" stop-color="#7ea2ec"/><stop offset="1" stop-color="#3f6fdc"/></linearGradient><linearGradient id="wbd" x1="0" y1="0" x2="1" y2="1"><stop offset="0" stop-color="#ffffff"/><stop offset="1" stop-color="#d6e0f6"/></linearGradient></defs><rect x=".2" y=".2" width="18.5" height="18.4" rx=".8" fill="#6c7c96"/><rect x=".9" y="3.4" width="16.2" height="13.6" fill="url(#wbd)"/><rect x=".2" y=".2" width="18.5" height="3.3" fill="url(#wtb)"/><g fill="#5aa51a"><rect x="1.9" y="4.9" width="2.2" height="1.3" rx=".5"/><rect x="4.8" y="6.9" width="1.3" height="2" rx=".5"/><circle cx="5.4" cy="10.4" r=".8"/><rect x="1.9" y="12" width="1.8" height="1.8" rx=".4" opacity=".6"/><circle cx="5.4" cy="15.4" r=".8"/></g><path d="M5.2,5.6h10.6M7.8,10.4h8M7.8,15.4h8" stroke="#6d7c96" stroke-width="1"/><rect x="7.2" y="7.1" width="3.8" height="1.6" fill="#b9c3d6"/><rect x="5" y="12.1" width="7" height="1.7" fill="#aab5cb"/></svg>
<svg style="left:56.6px;top:654px" width="6" height="4"><path d="M0,0h5.8l-2.9,3.1z" fill="#000"/></svg>
<svg style="left:70px;top:645px" width="20" height="19" viewBox="0 0 20 19"><defs><linearGradient id="wtb" x1="0" x2="1"><stop offset="0" stop-color="#7ea2ec"/><stop offset="1" stop-color="#3f6fdc"/></linearGradient><linearGradient id="wbd" x1="0" y1="0" x2="1" y2="1"><stop offset="0" stop-color="#ffffff"/><stop offset="1" stop-color="#d6e0f6"/></linearGradient></defs><rect x=".2" y=".2" width="19.6" height="18.4" rx=".8" fill="#6c7c96"/><rect x=".9" y="3.6" width="17.2" height="13.4" fill="url(#wbd)"/><rect x=".2" y=".2" width="19.6" height="3.5" fill="url(#wtb)"/><path d="M5,9.6 C5,6.6 8,6 10.4,6.3 L10.4,4.6 L14,7.6 L10.4,10.4 L10.4,8.7 C8.6,8.5 7.4,8.9 7.2,10.4 Z" fill="#5a9c12"/><path d="M14.6,10.6 C14.6,13.6 11.6,14.2 9.2,13.9 L9.2,15.6 L5.6,12.6 L9.2,9.8 L9.2,11.5 C11,11.7 12.2,11.3 12.4,9.8 Z" fill="#5a9c12"/></svg>
<svg style="left:3px;top:678px" width="16" height="13" viewBox="0 0 16 13"><rect x=".5" y=".5" width="15" height="12" fill="#fff" stroke="#707070"/><rect x="1" y="1" width="3" height="11" fill="#f6c35a"/><path d="M1,4.5h14M1,8.5h14M4.5,1v11" stroke="#707070" stroke-width="1"/></svg>
<div class="t" style="left:30.00px;top:676.96px;font-size:13.1px;line-height:17px;color:#000;letter-spacing:0.227px;">table7 Row Groups</div>
<svg style="left:693.5px;top:677px" width="17" height="13" viewBox="0 0 17 13"><rect x=".5" y=".5" width="15.5" height="12" fill="#fff" stroke="#707070"/><rect x="1" y="1" width="14.5" height="3" fill="#f6c35a"/><path d="M1,4.2h15M4.3,1v11.5M8.2,1v11.5M12.1,1v11.5" stroke="#707070" stroke-width="1"/></svg>
<div class="t" style="left:720.00px;top:676.96px;font-size:13.1px;line-height:17px;color:#000;letter-spacing:0.376px;">table7 Column Groups</div>
<div style="left:-1px;top:700px;width:683.8px;height:125px;background:#fff;border:1px solid #8e949c;"></div>
<div style="left:159px;top:702.5px;width:1px;height:25.5px;background:#e2e2e2;"></div>
<div style="left:160px;top:728px;width:1px;height:95.5px;background:#ececec;"></div>
<div style="left:239px;top:702.5px;width:1px;height:25.5px;background:#e2e2e2;"></div>
<div style="left:240px;top:728px;width:1px;height:95.5px;background:#ececec;"></div>
<div style="left:319px;top:702.5px;width:1px;height:25.5px;background:#e2e2e2;"></div>
<div style="left:320px;top:728px;width:1px;height:95.5px;background:#ececec;"></div>
<div style="left:399px;top:702.5px;width:1px;height:25.5px;background:#e2e2e2;"></div>
<div style="left:400px;top:728px;width:1px;height:95.5px;background:#ececec;"></div>
<div style="left:559px;top:702.5px;width:1px;height:25.5px;background:#e2e2e2;"></div>
<div style="left:560px;top:728px;width:1px;height:95.5px;background:#ececec;"></div>
<div style="left:0px;top:751px;width:679.8px;height:1px;background:#ececec;"></div>
<div style="left:0px;top:774.8px;width:679.8px;height:1px;background:#ececec;"></div>
<div style="left:0px;top:798.8px;width:679.8px;height:1px;background:#ececec;"></div>
<div class="t" style="left:6.00px;top:706.03px;font-size:15.2px;line-height:20px;color:#000;letter-spacing:-0.137px;">Name</div>
<div class="t" style="left:166.00px;top:706.03px;font-size:15.2px;line-height:20px;color:#000;letter-spacing:-0.015px;">Item</div>
<div class="t" style="left:246.00px;top:706.03px;font-size:15.2px;line-height:20px;color:#000;letter-spacing:-0.066px;">Grouping</div>
<div class="t" style="left:326.00px;top:706.03px;font-size:15.2px;line-height:20px;color:#000;letter-spacing:-0.046px;">Filter</div>
<div class="t" style="left:406.00px;top:706.03px;font-size:15.2px;line-height:20px;color:#000;letter-spacing:-0.023px;">Sorting</div>
<div style="left:687.7px;top:700px;width:685.0999999999999px;height:125px;background:#fff;border:1px solid #8e949c;"></div>
<div style="left:849px;top:702.5px;width:1px;height:25.5px;background:#e2e2e2;"></div>
<div style="left:850px;top:728px;width:1px;height:95.5px;background:#ececec;"></div>
<div style="left:929px;top:702.5px;width:1px;height:25.5px;background:#e2e2e2;"></div>
<div style="left:930px;top:728px;width:1px;height:95.5px;background:#ececec;"></div>
<div style="left:1009px;top:702.5px;width:1px;height:25.5px;background:#e2e2e2;"></div>
<div style="left:1010px;top:728px;width:1px;height:95.5px;background:#ececec;"></div>
<div style="left:1089px;top:702.5px;width:1px;height:25.5px;background:#e2e2e2;"></div>
<div style="left:1090px;top:728px;width:1px;height:95.5px;background:#ececec;"></div>
<div style="left:1249px;top:702.5px;width:1px;height:25.5px;background:#e2e2e2;"></div>
<div style="left:1250px;top:728px;width:1px;height:95.5px;background:#ececec;"></div>
<div style="left:688.7px;top:751px;width:681.0999999999999px;height:1px;background:#ececec;"></div>
<div style="left:688.7px;top:774.8px;width:681.0999999999999px;height:1px;background:#ececec;"></div>
<div style="left:688.7px;top:798.8px;width:681.0999999999999px;height:1px;background:#ececec;"></div>
<div class="t" style="left:697.00px;top:706.03px;font-size:15.2px;line-height:20px;color:#000;letter-spacing:-0.137px;">Name</div>
<div class="t" style="left:857.00px;top:706.03px;font-size:15.2px;line-height:20px;color:#000;letter-spacing:-0.015px;">Item</div>
<div class="t" style="left:936.00px;top:706.03px;font-size:15.2px;line-height:20px;color:#000;letter-spacing:-0.066px;">Grouping</div>
<div class="t" style="left:1016.00px;top:706.03px;font-size:15.2px;line-height:20px;color:#000;letter-spacing:-0.046px;">Filter</div>
<div class="t" style="left:1096.00px;top:706.03px;font-size:15.2px;line-height:20px;color:#000;letter-spacing:-0.023px;">Sorting</div>
<svg style="left:6px;top:733.5px" width="12" height="13" viewBox="0 0 12 13"><path d="M3,0.8H0.9V12.2H3" fill="none" stroke="#e8590f" stroke-width="1.7"/><path d="M4.5,2.6h6.5M4.5,4.9h6.5M4.5,7.2h6.5M4.5,9.5h6.5" stroke="#41698f" stroke-width=".75"/></svg>
<div class="t" style="left:22.00px;top:731.96px;font-size:13.1px;line-height:17px;color:#000;letter-spacing:-0.134px;">itemdesc1</div>
<svg style="left:22px;top:758px" width="13" height="13" viewBox="0 0 13 13"><rect x=".5" y=".5" width="12" height="12" fill="#fff" stroke="#6d7d95"/><path d="M2.5,3.3h8M2.5,5.5h8M2.5,7.7h8M2.5,9.9h8" stroke="#e8692c" stroke-width="1.3" stroke-dasharray="1.6 .9"/></svg>
<div class="t" style="left:38.00px;top:755.96px;font-size:13.1px;line-height:17px;color:#000;letter-spacing:0.069px;">detailTableGroup4</div>
<div class="t" style="left:247.00px;top:731.96px;font-size:13.1px;line-height:17px;color:#000;letter-spacing:-0.203px;">= Fields.it...</div>
<div class="t" style="left:407.00px;top:731.96px;font-size:13.1px;line-height:17px;color:#000;letter-spacing:-0.221px;">= Fields.itemdesc ASC</div>
<svg style="left:696.5px;top:733.5px" width="12" height="13" viewBox="0 0 12 13"><path d="M3,0.8H0.9V12.2H3" fill="none" stroke="#e8590f" stroke-width="1.7"/><path d="M4.5,2.6h6.5M4.5,4.9h6.5M4.5,7.2h6.5M4.5,9.5h6.5" stroke="#41698f" stroke-width=".75"/></svg>
<div class="t" style="left:713.00px;top:731.96px;font-size:13.1px;line-height:17px;color:#000;letter-spacing:-0.134px;">itemdesc2</div>
<div class="t" style="left:857.00px;top:731.96px;font-size:13.1px;line-height:17px;color:#000;letter-spacing:-0.305px;">textBox109</div>
<div class="t" style="left:936.50px;top:731.96px;font-size:13.1px;line-height:17px;color:#000;letter-spacing:-0.203px;">= Fields.it...</div>
<div class="t" style="left:1096.50px;top:731.96px;font-size:13.1px;line-height:17px;color:#000;letter-spacing:-0.221px;">= Fields.itemdesc ASC</div>
<div style="left:1378px;top:0px;width:534px;height:28px;background:linear-gradient(#fdfdfd,#f8f8f8 40%,#efefef);border-radius:0 0 0 4px;"></div>
<div style="left:1378px;top:0px;width:534px;height:1px;background:#3358a3;"></div>
<div style="left:1910.6px;top:4px;width:1px;height:22px;background:#c6c6c6;"></div>
<div style="left:1915px;top:0px;width:2px;height:826px;background:#1c1c1c;"></div>
<svg style="left:1382px;top:3px" width="20" height="22" viewBox="0 0 20 22"><defs><linearGradient id="pn" x1="0" y1="0" x2="1" y2="1"><stop offset="0" stop-color="#ff8a78"/><stop offset="1" stop-color="#e8381c"/></linearGradient></defs><rect x=".4" y="2.3" width="16.6" height="18.4" fill="#7482bd"/><rect x=".9" y="2.6" width="15" height="16.9" fill="#b9d7f8"/><path d="M3.5,5h9.5M3.5,16.4h9.5" stroke="#8fb3e6" stroke-width="1"/><rect x="3.8" y="7.2" width="9.4" height="7.4" fill="#9fc0ec"/><rect x="5" y="10" width="7.2" height="3.2" fill="#fff"/><rect x="4.7" y="8" width="2.4" height="1.6" fill="#4c4cf0"/><path d="M15.4,.9 L18.9,2.6 L10.6,11.2 L7.4,11.8 L8.1,9.2 Z" fill="url(#pn)"/><path d="M8.1,9.2 L10.6,11.2 L6.6,12 Z" fill="#f3d3b0"/><path d="M6.4,11.6 h4" stroke="#c0392b" stroke-width="1"/><path d="M15.4,.9 L18.9,2.6 L17.8,3.8 L14.4,2 Z" fill="#e62e00"/></svg>
<svg style="left:1411px;top:4px" width="20" height="19" viewBox="0 0 20 19"><defs><linearGradient id="wtb" x1="0" x2="1"><stop offset="0" stop-color="#7ea2ec"/><stop offset="1" stop-color="#3f6fdc"/></linearGradient><linearGradient id="wbd" x1="0" y1="0" x2="1" y2="1"><stop offset="0" stop-color="#ffffff"/><stop offset="1" stop-color="#d6e0f6"/></linearGradient></defs><rect x=".2" y=".2" width="19.6" height="18.4" rx=".8" fill="#6c7c96"/><rect x=".9" y="3.6" width="17.2" height="13.4" fill="url(#wbd)"/><rect x=".2" y=".2" width="19.6" height="3.5" fill="url(#wtb)"/><path d="M5,9.6 C5,6.6 8,6 10.4,6.3 L10.4,4.6 L14,7.6 L10.4,10.4 L10.4,8.7 C8.6,8.5 7.4,8.9 7.2,10.4 Z" fill="#5a9c12"/><path d="M14.6,10.6 C14.6,13.6 11.6,14.2 9.2,13.9 L9.2,15.6 L5.6,12.6 L9.2,9.8 L9.2,11.5 C11,11.7 12.2,11.3 12.4,9.8 Z" fill="#5a9c12"/></svg>
<svg style="left:1384px;top:33px" width="12" height="12" viewBox="0 0 12 12"><defs><linearGradient id="ebx" x1="0" y1="0" x2="0" y2="1"><stop offset=".45" stop-color="#fff"/><stop offset="1" stop-color="#dcdcdc"/></linearGradient></defs><rect x=".5" y=".5" width="10" height="10" rx="1.2" fill="url(#ebx)" stroke="#929292"/><path d="M2.2,5.5h6.6" stroke="#3b5fb5" stroke-width="1.2"/></svg>
<div style="left:1396px;top:38px;width:5px;height:1px;background:repeating-linear-gradient(90deg,#8a8a8a 0 1px,transparent 1px 2px);"></div>
<svg style="left:1402.5px;top:30px" width="13" height="16" viewBox="0 0 13 16"><defs><linearGradient id="cy2" x1="0" x2="1"><stop offset="0" stop-color="#f0b429"/><stop offset=".4" stop-color="#fff0a8"/><stop offset="1" stop-color="#d99a14"/></linearGradient></defs><path d="M.6,2.4 C.6,.4 11.4,.4 11.4,2.4 V13.4 C11.4,15.6 .6,15.6 .6,13.4 Z" fill="url(#cy2)" stroke="#b08a3a" stroke-width=".8"/><ellipse cx="6" cy="2.5" rx="5.2" ry="1.6" fill="#fdf0b4" stroke="#c8a040" stroke-width=".5"/></svg>
<div class="t" style="left:1420.80px;top:29.60px;font-size:13px;line-height:17px;color:#000;letter-spacing:-0.115px;">jsonDataSource2</div>
<div style="left:1408px;top:48px;width:1px;height:107px;background:repeating-linear-gradient(#8a8a8a 0 1px,transparent 1px 2px);"></div>
<div style="left:1409px;top:58px;width:9px;height:1px;background:repeating-linear-gradient(90deg,#8a8a8a 0 1px,transparent 1px 2px);"></div>
<svg style="left:1418.8px;top:52px" width="16" height="12" viewBox="0 0 16 12"><rect x=".5" y=".5" width="14" height="10" fill="#fffcf0" stroke="#9c8552"/><path d="M.6,10.6h14.2M14.6,.6v10" stroke="#5e4e36" stroke-width="1"/><path d="M1.4,1.4h12.4M1.4,1.4v8.4" stroke="#ece0b8" stroke-width=".9"/><text x="7.5" y="8.8" font-size="8.8" font-weight="bold" font-family="Liberation Sans,sans-serif" fill="#060690" stroke="#060690" stroke-width=".35" text-anchor="middle" textLength="11" lengthAdjust="spacingAndGlyphs">abc</text></svg>
<div class="t" style="left:1440.30px;top:49.60px;font-size:13px;line-height:17px;color:#000;letter-spacing:-0.048px;">accprv</div>
<div style="left:1409px;top:78px;width:9px;height:1px;background:repeating-linear-gradient(90deg,#8a8a8a 0 1px,transparent 1px 2px);"></div>
<svg style="left:1418.8px;top:72px" width="16" height="12" viewBox="0 0 16 12"><rect x=".5" y=".5" width="14" height="10" fill="#fffcf0" stroke="#9c8552"/><path d="M.6,10.6h14.2M14.6,.6v10" stroke="#5e4e36" stroke-width="1"/><path d="M1.4,1.4h12.4M1.4,1.4v8.4" stroke="#ece0b8" stroke-width=".9"/><text x="7.5" y="8.8" font-size="8.8" font-weight="bold" font-family="Liberation Sans,sans-serif" fill="#060690" stroke="#060690" stroke-width=".35" text-anchor="middle" textLength="11" lengthAdjust="spacingAndGlyphs">abc</text></svg>
<div class="t" style="left:1440.30px;top:69.60px;font-size:13px;line-height:17px;color:#000;letter-spacing:-0.226px;">actinl1</div>
<div style="left:1409px;top:98px;width:9px;height:1px;background:repeating-linear-gradient(90deg,#8a8a8a 0 1px,transparent 1px 2px);"></div>
<svg style="left:1418.8px;top:92px" width="16" height="12" viewBox="0 0 16 12"><rect x=".5" y=".5" width="14" height="10" fill="#fffcf0" stroke="#9c8552"/><path d="M.6,10.6h14.2M14.6,.6v10" stroke="#5e4e36" stroke-width="1"/><path d="M1.4,1.4h12.4M1.4,1.4v8.4" stroke="#ece0b8" stroke-width=".9"/><text x="7.5" y="8.8" font-size="8.8" font-weight="bold" font-family="Liberation Sans,sans-serif" fill="#060690" stroke="#060690" stroke-width=".35" text-anchor="middle" textLength="11" lengthAdjust="spacingAndGlyphs">abc</text></svg>
<div class="t" style="left:1440.30px;top:89.60px;font-size:13px;line-height:17px;color:#000;letter-spacing:-0.154px;">actinl2</div>
<div style="left:1409px;top:118px;width:9px;height:1px;background:repeating-linear-gradient(90deg,#8a8a8a 0 1px,transparent 1px 2px);"></div>
<svg style="left:1418.8px;top:112px" width="16" height="12" viewBox="0 0 16 12"><rect x=".5" y=".5" width="14" height="10" fill="#fffcf0" stroke="#9c8552"/><path d="M.6,10.6h14.2M14.6,.6v10" stroke="#5e4e36" stroke-width="1"/><path d="M1.4,1.4h12.4M1.4,1.4v8.4" stroke="#ece0b8" stroke-width=".9"/><text x="7.5" y="8.8" font-size="8.8" font-weight="bold" font-family="Liberation Sans,sans-serif" fill="#060690" stroke="#060690" stroke-width=".35" text-anchor="middle" textLength="11" lengthAdjust="spacingAndGlyphs">abc</text></svg>
<div class="t" style="left:1440.30px;top:109.60px;font-size:13px;line-height:17px;color:#000;letter-spacing:-0.160px;">actmml1</div>
<div style="left:1409px;top:138px;width:9px;height:1px;background:repeating-linear-gradient(90deg,#8a8a8a 0 1px,transparent 1px 2px);"></div>
<svg style="left:1418.8px;top:132px" width="16" height="12" viewBox="0 0 16 12"><rect x=".5" y=".5" width="14" height="10" fill="#fffcf0" stroke="#9c8552"/><path d="M.6,10.6h14.2M14.6,.6v10" stroke="#5e4e36" stroke-width="1"/><path d="M1.4,1.4h12.4M1.4,1.4v8.4" stroke="#ece0b8" stroke-width=".9"/><text x="7.5" y="8.8" font-size="8.8" font-weight="bold" font-family="Liberation Sans,sans-serif" fill="#060690" stroke="#060690" stroke-width=".35" text-anchor="middle" textLength="11" lengthAdjust="spacingAndGlyphs">abc</text></svg>
<div class="t" style="left:1440.30px;top:129.60px;font-size:13px;line-height:17px;color:#000;letter-spacing:-0.089px;">actmml2</div>
<div style="left:1378px;top:150px;width:120px;height:5px;overflow:hidden;">
<svg style="left:40.8px;top:2px" width="16" height="12" viewBox="0 0 16 12"><rect x=".5" y=".5" width="14.5" height="10.5" fill="#fffdf3" stroke="#a08a4a"/></svg>
<div class="t" style="left:62.30px;top:-0.40px;font-size:13px;line-height:17px;color:#000;">actual</div>
</div>
<div style="left:1892px;top:28px;width:20px;height:127px;background:#f0f0f0;"></div>
<div style="left:1892.3px;top:49px;width:18.7px;height:21px;background:#cdcdcd;"></div>
<svg style="left:1901.5px;top:38.5px" width="1" height="1"><path d="M-4.5,2.25 L0,-2.25 L4.5,2.25" fill="none" stroke="#5a5a5a" stroke-width="1.8"/></svg>
<svg style="left:1901.5px;top:144.5px" width="1" height="1"><path d="M-4.5,-2.25 L0,2.25 L4.5,-2.25" fill="none" stroke="#5a5a5a" stroke-width="1.8"/></svg>
<div style="left:1378px;top:155px;width:1px;height:31px;background:#c0c0c0;"></div>
<div style="left:1378px;top:185px;width:116px;height:1px;background:#bdbdbd;"></div>
<div class="t" style="left:1386.00px;top:158.60px;font-size:15px;line-height:20px;color:#000;letter-spacing:-0.203px;">Report Explorer</div>
<div style="left:1494.2px;top:155px;width:104.2px;height:30.8px;background:#3358a3;"></div>
<div class="t" style="left:1502.30px;top:158.60px;font-size:15px;line-height:20px;color:#fff;letter-spacing:-0.208px;">Data Explorer</div>
<div style="left:1378px;top:191px;width:534px;height:31.8px;background:#3358a3;"></div>
<div class="t" style="left:1384.70px;top:197.76px;font-size:16px;line-height:21px;color:#fff;letter-spacing:0.458px;">Properties</div>
<svg style="left:1891.3px;top:201.8px" width="10" height="10" viewBox="0 0 10 10"><path d="M1.5,1.5 L8.5,8.5 M8.5,1.5 L1.5,8.5" stroke="#fff" stroke-width="2.6"/></svg>
<div style="left:1378px;top:268px;width:534px;height:30px;background:#f0f0f0;"></div>
<div style="left:1380.2px;top:270.2px;width:28.6px;height:24.5px;background:#c2ddf2;border:1.3px solid #0a7ad8;"></div>
<svg style="left:1385px;top:274px" width="20" height="20" viewBox="0 0 20 20"><g fill="#333"><rect x=".9" y="1" width="6" height="5.8"/><rect x=".9" y="12.2" width="6" height="5.8"/></g><g fill="#fff"><rect x="2.6" y="2.6" width="2.6" height="2.6" rx=".8"/><rect x="2.6" y="13.8" width="2.6" height="2.6" rx=".8"/></g><g stroke="#4a4a4a" stroke-width="1.1"><path d="M8.2,1.4h6M8.2,4h6M8.2,6.4h6M8.2,9h6M8.2,11.4h6M8.2,15h6M8.2,17.5h6"/><path d="M15.6,4h2M15.6,6.4h2M15.6,9h2M15.6,11.4h2M15.6,17.5h2" stroke-width="1"/></g></svg>
<svg style="left:1414px;top:273px" width="21" height="21" viewBox="0 0 21 21"><rect x="1.2" y="2.1" width="7.8" height="7.8" fill="#2c2c2c"/><text x="5.1" y="9.2" font-size="8.6" font-weight="bold" font-family="Liberation Sans,sans-serif" fill="#fff" text-anchor="middle">A</text><text x="5.2" y="19.2" font-size="9.6" font-weight="bold" font-family="Liberation Sans,sans-serif" fill="#2c2c2c" text-anchor="middle">Z</text><path d="M14.5,5v9" stroke="#0a57a8" stroke-width="2"/><path d="M10.2,12 L14.5,17.6 L18.8,12 L16.6,12 L14.5,14 L12.4,12 Z" fill="#0a57a8"/></svg>
<div style="left:1440px;top:271px;width:1px;height:25px;background:#5c5c5c;"></div>
<svg style="left:1449.8px;top:276px" width="18" height="17" viewBox="0 0 18 17"><rect x="0" y="0" width="17.2" height="3.6" fill="#a6a6a6"/><rect x="11.6" y="3.6" width="5.6" height="10.4" fill="#d6d6d6" stroke="#b0b0b0" stroke-width=".8"/><rect x=".4" y="7" width="9.4" height="9" fill="#cfcfcf" stroke="#a8a8a8" stroke-width=".9"/><rect x=".4" y="7" width="9.4" height="2" fill="#a8a8a8"/><path d="M2.2,11h2.2M5.6,11h2.2M2.2,13.6h2.2M5.6,13.6h2.2" stroke="#9a9a9a" stroke-width="1.4"/></svg>
<div style="left:1378px;top:298px;width:534px;height:449.8px;background:#fff;border:1px solid #8c8c8c;overflow:hidden;"></div>
<div style="left:1379px;top:299.5px;width:512px;height:447.5px;overflow:hidden;">
<div style="left:0px;top:0px;width:26px;height:460px;background:#f3f5fb;"></div>
<div style="left:26px;top:18.5px;width:486px;height:1px;background:#f0f2f8;"></div>
<div style="left:231.5px;top:0.0px;width:1px;height:19.0px;background:#f0f2f8;"></div>
<div class="t" style="left:30.00px;top:0.15px;font-size:14.3px;line-height:19px;color:#000;letter-spacing:-0.047px;">ConditionalFormatting</div>
<div style="left:26px;top:37.5px;width:486px;height:1px;background:#f0f2f8;"></div>
<div style="left:231.5px;top:19.0px;width:1px;height:19.0px;background:#f0f2f8;"></div>
<div class="t" style="left:30.00px;top:19.15px;font-size:14.3px;line-height:19px;color:#000;letter-spacing:-0.204px;">Format</div>
<div style="left:26px;top:56.5px;width:486px;height:1px;background:#f0f2f8;"></div>
<div style="left:231.5px;top:38.0px;width:1px;height:19.0px;background:#f0f2f8;"></div>
<div class="t" style="left:30.00px;top:38.15px;font-size:14.3px;line-height:19px;color:#000;letter-spacing:-0.172px;">Style</div>
<svg style="left:13.5px;top:47.7px" width="1" height="1"><path d="M-2.6,-5.2 L2.6,0 L-2.6,5.2" fill="none" stroke="#3c3c3c" stroke-width="1.9"/></svg>
<div style="left:26px;top:75.5px;width:486px;height:1px;background:#f0f2f8;"></div>
<div style="left:231.5px;top:57.0px;width:1px;height:19.0px;background:#f0f2f8;"></div>
<div class="t" style="left:30.00px;top:57.15px;font-size:14.3px;line-height:19px;color:#000;letter-spacing:-0.210px;">StyleName</div>
<div style="left:26px;top:94.5px;width:486px;height:1px;background:#f0f2f8;"></div>
<div style="left:231.5px;top:76.0px;width:1px;height:19.0px;background:#f0f2f8;"></div>
<div class="t" style="left:30.00px;top:76.15px;font-size:14.3px;line-height:19px;color:#000;letter-spacing:-0.203px;">TextWrap</div>
<div class="t" style="left:236.30px;top:76.15px;font-size:14.3px;line-height:19px;color:#000;letter-spacing:-0.180px;">True</div>
<div style="left:26px;top:113.5px;width:486px;height:1px;background:#f0f2f8;"></div>
<div style="left:231.5px;top:95.0px;width:1px;height:19.0px;background:#f0f2f8;"></div>
<div class="t" style="left:30.00px;top:95.15px;font-size:14.3px;line-height:19px;color:#000;letter-spacing:-0.176px;">ToolTip</div>
<svg style="left:13.5px;top:104.7px" width="1" height="1"><path d="M-2.6,-5.2 L2.6,0 L-2.6,5.2" fill="none" stroke="#3c3c3c" stroke-width="1.9"/></svg>
<div style="left:26px;top:132.5px;width:486px;height:1px;background:#f0f2f8;"></div>
<div style="left:231.5px;top:114.0px;width:1px;height:19.0px;background:#f0f2f8;"></div>
<div class="t" style="left:30.00px;top:114.15px;font-size:14.3px;line-height:19px;color:#000;letter-spacing:-0.192px;">Value</div>
<div style="left:0px;top:133.0px;width:512px;height:19px;background:#f3f5fb;"></div>
<div class="t" style="left:30.00px;top:133.15px;font-size:14.3px;line-height:19px;color:#000;font-weight:bold;letter-spacing:0.375px;">Behavior</div>
<svg style="left:12.3px;top:142.7px" width="1" height="1"><path d="M-5.2,-2.6 L0,2.6 L5.2,-2.6" fill="none" stroke="#3c3c3c" stroke-width="1.9"/></svg>
<div style="left:26px;top:170.5px;width:486px;height:1px;background:#f0f2f8;"></div>
<div style="left:231.5px;top:152.0px;width:1px;height:19.0px;background:#f0f2f8;"></div>
<div class="t" style="left:30.00px;top:152.15px;font-size:14.3px;line-height:19px;color:#000;letter-spacing:-0.178px;">Culture</div>
<div class="t" style="left:236.30px;top:152.15px;font-size:14.3px;line-height:19px;color:#000;letter-spacing:-0.152px;">(Default)</div>
<div style="left:26px;top:189.5px;width:486px;height:1px;background:#f0f2f8;"></div>
<div style="left:231.5px;top:171.0px;width:1px;height:19.0px;background:#f0f2f8;"></div>
<div class="t" style="left:30.00px;top:171.15px;font-size:14.3px;line-height:19px;color:#000;letter-spacing:-0.190px;">ItemDataBinding</div>
<div style="left:26px;top:208.5px;width:486px;height:1px;background:#f0f2f8;"></div>
<div style="left:231.5px;top:190.0px;width:1px;height:19.0px;background:#f0f2f8;"></div>
<div class="t" style="left:30.00px;top:190.15px;font-size:14.3px;line-height:19px;color:#000;letter-spacing:-0.206px;">ItemDataBound</div>
<div style="left:26px;top:227.5px;width:486px;height:1px;background:#f0f2f8;"></div>
<div style="left:231.5px;top:209.0px;width:1px;height:19.0px;background:#f0f2f8;"></div>
<div class="t" style="left:30.00px;top:209.15px;font-size:14.3px;line-height:19px;color:#000;letter-spacing:-0.200px;">KeepTogether</div>
<div class="t" style="left:236.30px;top:209.15px;font-size:14.3px;line-height:19px;color:#000;letter-spacing:-0.180px;">True</div>
<div style="left:26px;top:246.5px;width:486px;height:1px;background:#f0f2f8;"></div>
<div style="left:231.5px;top:228.0px;width:1px;height:19.0px;background:#f0f2f8;"></div>
<div class="t" style="left:30.00px;top:228.15px;font-size:14.3px;line-height:19px;color:#000;letter-spacing:-0.157px;">Multiline</div>
<div class="t" style="left:236.30px;top:228.15px;font-size:14.3px;line-height:19px;color:#000;letter-spacing:-0.180px;">True</div>
<div style="left:26px;top:265.5px;width:486px;height:1px;background:#f0f2f8;"></div>
<div style="left:231.5px;top:247.0px;width:1px;height:19.0px;background:#f0f2f8;"></div>
<div class="t" style="left:30.00px;top:247.15px;font-size:14.3px;line-height:19px;color:#000;letter-spacing:-0.161px;">Visible</div>
<div class="t" style="left:236.30px;top:247.15px;font-size:14.3px;line-height:19px;color:#000;letter-spacing:-0.180px;">True</div>
<div style="left:0px;top:266.0px;width:512px;height:19px;background:#f3f5fb;"></div>
<div class="t" style="left:30.00px;top:266.15px;font-size:14.3px;line-height:19px;color:#000;font-weight:bold;letter-spacing:-0.116px;">Data</div>
<svg style="left:12.3px;top:275.7px" width="1" height="1"><path d="M-5.2,-2.6 L0,2.6 L5.2,-2.6" fill="none" stroke="#3c3c3c" stroke-width="1.9"/></svg>
<div style="left:26px;top:285.0px;width:205.5px;height:18.5px;background:#f3f5fb;"></div>
<div style="left:26px;top:303.5px;width:486px;height:1px;background:#f0f2f8;"></div>
<div style="left:231.5px;top:285.0px;width:1px;height:19.0px;background:#f0f2f8;"></div>
<div class="t" style="left:30.00px;top:285.15px;font-size:14.3px;line-height:19px;color:#000;letter-spacing:-0.185px;">Bindings</div>
<div style="left:0px;top:304.0px;width:512px;height:19px;background:#f3f5fb;"></div>
<div class="t" style="left:30.00px;top:304.15px;font-size:14.3px;line-height:19px;color:#000;font-weight:bold;letter-spacing:0.173px;">Interactivity</div>
<svg style="left:12.3px;top:313.7px" width="1" height="1"><path d="M-5.2,-2.6 L0,2.6 L5.2,-2.6" fill="none" stroke="#3c3c3c" stroke-width="1.9"/></svg>
<div style="left:26px;top:341.5px;width:486px;height:1px;background:#f0f2f8;"></div>
<div style="left:231.5px;top:323.0px;width:1px;height:19.0px;background:#f0f2f8;"></div>
<div class="t" style="left:30.00px;top:323.15px;font-size:14.3px;line-height:19px;color:#000;letter-spacing:-0.179px;">Action</div>
<div style="left:26px;top:360.5px;width:486px;height:1px;background:#f0f2f8;"></div>
<div style="left:231.5px;top:342.0px;width:1px;height:19.0px;background:#f0f2f8;"></div>
<div class="t" style="left:30.00px;top:342.15px;font-size:14.3px;line-height:19px;color:#000;letter-spacing:-0.206px;">BookmarkId</div>
<div style="left:26px;top:379.5px;width:486px;height:1px;background:#f0f2f8;"></div>
<div style="left:231.5px;top:361.0px;width:1px;height:19.0px;background:#f0f2f8;"></div>
<div class="t" style="left:30.00px;top:361.15px;font-size:14.3px;line-height:19px;color:#000;letter-spacing:-0.215px;">DocumentMapText</div>
<div style="left:26px;top:398.5px;width:486px;height:1px;background:#f0f2f8;"></div>
<div style="left:231.5px;top:380.0px;width:1px;height:19.0px;background:#f0f2f8;"></div>
<div class="t" style="left:30.00px;top:380.15px;font-size:14.3px;line-height:19px;color:#000;letter-spacing:-0.187px;">TocText</div>
<div style="left:0px;top:399.0px;width:512px;height:19px;background:#f3f5fb;"></div>
<div class="t" style="left:30.00px;top:399.15px;font-size:14.3px;line-height:19px;color:#000;font-weight:bold;letter-spacing:-0.117px;">Layout</div>
<svg style="left:12.3px;top:408.7px" width="1" height="1"><path d="M-5.2,-2.6 L0,2.6 L5.2,-2.6" fill="none" stroke="#3c3c3c" stroke-width="1.9"/></svg>
<div style="left:26px;top:436.5px;width:486px;height:1px;background:#f0f2f8;"></div>
<div style="left:231.5px;top:418.0px;width:1px;height:19.0px;background:#f0f2f8;"></div>
<div class="t" style="left:30.00px;top:418.15px;font-size:14.3px;line-height:19px;color:#000;letter-spacing:-0.233px;">CanGrow</div>
<div class="t" style="left:236.30px;top:418.15px;font-size:14.3px;line-height:19px;color:#000;letter-spacing:-0.180px;">True</div>
<div style="left:26px;top:455.5px;width:486px;height:1px;background:#f0f2f8;"></div>
<div style="left:231.5px;top:437.0px;width:1px;height:19.0px;background:#f0f2f8;"></div>
<div class="t" style="left:30.00px;top:437.15px;font-size:14.3px;line-height:19px;color:#000;letter-spacing:-0.200px;">CanShrink</div>
<div class="t" style="left:236.30px;top:437.15px;font-size:14.3px;line-height:19px;color:#000;letter-spacing:-0.175px;">False</div>
</div>
<div style="left:1891px;top:299.5px;width:20px;height:447.5px;background:#f0f0f0;"></div>
<div style="left:1891.5px;top:376px;width:18.5px;height:321.5px;background:#c8c8c8;"></div>
<svg style="left:1901px;top:310px" width="1" height="1"><path d="M-4.5,2.25 L0,-2.25 L4.5,2.25" fill="none" stroke="#5a5a5a" stroke-width="1.8"/></svg>
<svg style="left:1901px;top:736px" width="1" height="1"><path d="M-4.5,-2.25 L0,2.25 L4.5,-2.25" fill="none" stroke="#5a5a5a" stroke-width="1.8"/></svg>
<div style="left:1378px;top:750.7px;width:534px;height:74.3px;background:#f0f0f0;border:1px solid #a0a0a0;"></div>
<div class="t" style="left:1385.00px;top:753.95px;font-size:14.3px;line-height:19px;color:#000;font-weight:bold;">Bindings</div>
<div class="t" style="left:1385.00px;top:772.15px;font-size:14.3px;line-height:19px;color:#000;letter-spacing:-0.033px;">Gets the collection of binding rules contained within the report item</div>
<div style="left:1374px;top:564px;width:276.3px;height:41.8px;border:5px solid #b5e61d;"></div>
</body></html>
